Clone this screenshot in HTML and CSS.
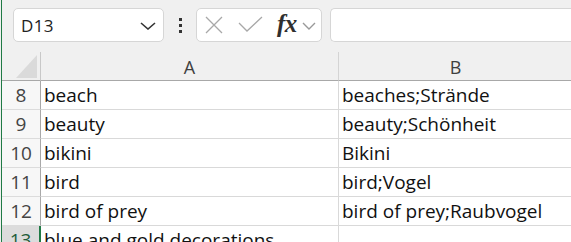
FILE: index.html
```html
<!DOCTYPE html>
<html>
<head>
<meta charset="utf-8">
<link rel="stylesheet" href="styles.css">
</head>
<body>
<div class="app">
  <div class="fbar">
    <div class="namebox">
      <span class="ref">D13</span>
      <svg class="chev" width="16" height="8" viewBox="0 0 16 8"><path d="M1 1 L8 7 L15 1" fill="none" stroke="#333" stroke-width="1.6"/></svg>
    </div>
    <div class="dots"><i></i><i></i><i></i></div>
    <div class="fxbox">
      <svg class="xic" width="18" height="18" viewBox="0 0 18 18"><path d="M1 1 L17 17 M17 1 L1 17" stroke="#a8a8a8" stroke-width="1.3" fill="none"/></svg>
      <svg class="ok" width="25" height="17" viewBox="0 0 25 17"><path d="M1 7 L9 15 L24 1" stroke="#a8a8a8" stroke-width="1.3" fill="none"/></svg>
      <span class="fx">fx</span>
      <svg class="chev2" width="14" height="8" viewBox="0 0 14 8"><path d="M1 1 L7 7 L13 1" fill="none" stroke="#999" stroke-width="1.4"/></svg>
    </div>
    <div class="input"></div>
  </div>
  <div class="grid">
    <div class="corner"><div class="tri"></div></div>
    <div class="colh">A</div>
    <div class="colh last">B</div>

    <div class="rowh">8</div><div class="cell">beach</div><div class="cell last">beaches;Strände</div>
    <div class="rowh">9</div><div class="cell">beauty</div><div class="cell last">beauty;Schönheit</div>
    <div class="rowh">10</div><div class="cell">bikini</div><div class="cell last">Bikini</div>
    <div class="rowh">11</div><div class="cell">bird</div><div class="cell last">bird;Vogel</div>
    <div class="rowh">12</div><div class="cell">bird of prey</div><div class="cell last">bird of prey;Raubvogel</div>
    <div class="rowh sel">13</div><div class="cell">blue and gold decorations</div><div class="cell last"></div>
  </div>
</div>
</body>
</html>
```
FILE: styles.css
```css
html, body {
  margin: 0;
  padding: 0;
  background: #f0f0f0;
  overflow: hidden;
}
.app {
  width: 570px;
  height: 242px;
  margin-left: 1px;
  border-left: 1px solid #1f7a45;
  overflow: hidden;
  background: #f0f0f0;
}
.fbar {
  height: 52px;
  display: flex;
  align-items: flex-start;
  padding-top: 8px;
  box-sizing: border-box;
}
.namebox {
  margin-left: 11px;
  width: 151px;
  height: 34px;
  box-sizing: border-box;
  background: #fff;
  border: 1px solid #d6d6d6;
  border-radius: 5px;
  display: flex;
  align-items: center;
  justify-content: space-between;
  padding: 0 7px 0 7px;
}
.ref {
  font-family: "Open Sans", sans-serif;
  font-size: 17px;
  color: #222;
  letter-spacing: 0.3px;
}
.chev { margin-top: 1px; }
.dots {
  width: 32px;
  height: 34px;
  display: flex;
  flex-direction: column;
  align-items: center;
  justify-content: center;
  gap: 3px;
}
.dots i {
  display: block;
  width: 3px;
  height: 3px;
  background: #333;
}
.fxbox {
  width: 126px;
  height: 34px;
  box-sizing: border-box;
  background: #fff;
  border: 1px solid #d6d6d6;
  border-radius: 5px;
  display: flex;
  align-items: center;
  padding-left: 8px;
}
.xic { margin-right: 15px; }
.ok { margin-right: 14px; margin-top: -1px; }
.fx {
  font-family: "Liberation Serif", serif;
  font-style: italic;
  font-weight: bold;
  font-size: 25px;
  color: #2f2f2f;
  margin-right: 5px;
  margin-top: -3px;
  letter-spacing: -0.5px;
}
.chev2 { margin-top: 1px; }
.input {
  margin-left: 8px;
  flex: 1;
  height: 34px;
  box-sizing: border-box;
  background: #fff;
  border: 1px solid #d6d6d6;
  border-right: none;
  border-radius: 5px 0 0 5px;
}
.grid {
  display: grid;
  grid-template-columns: 39px 298px 1fr;
  grid-template-rows: 29px repeat(6, 29px);
  background: #fff;
}
.corner {
  background: #f0f0f0;
  border-right: 1px solid #c8c8c8;
  border-bottom: 1px solid #a8a8a8;
  position: relative;
}
.tri {
  position: absolute;
  left: 14px;
  top: 3px;
  width: 0;
  height: 0;
  border-style: solid;
  border-width: 0 0 23px 21px;
  border-color: transparent transparent #dadada transparent;
}
.colh {
  background: #f0f0f0;
  border-right: 1px solid #d4d4d4;
  border-bottom: 1px solid #a8a8a8;
  font-family: "Open Sans", sans-serif;
  font-size: 18px;
  color: #404040;
  display: flex;
  align-items: flex-end;
  justify-content: center;
  padding-bottom: 1px;
  box-sizing: border-box;
  line-height: 24px;
}
.colh.last { border-right: none; }
.rowh {
  background: #f7f7f7;
  border-right: 1px solid #a8a8a8;
  border-bottom: 1px solid #dcdcdc;
  font-family: "Open Sans", sans-serif;
  font-size: 19px;
  color: #444;
  display: flex;
  align-items: center;
  justify-content: center;
  box-sizing: border-box;
}
.rowh.sel {
  background: #dcdcdc;
  border-right: 2px solid #1f7a45;
  color: #1f5c3a;
}
.cell {
  border-right: 1px solid #d9d9d9;
  border-bottom: 1px solid #d9d9d9;
  font-family: "Open Sans", sans-serif;
  font-size: 19px;
  color: #111;
  padding-left: 3px;
  display: flex;
  align-items: center;
  white-space: nowrap;
  box-sizing: border-box;
}
.cell.last { border-right: none; }
```
